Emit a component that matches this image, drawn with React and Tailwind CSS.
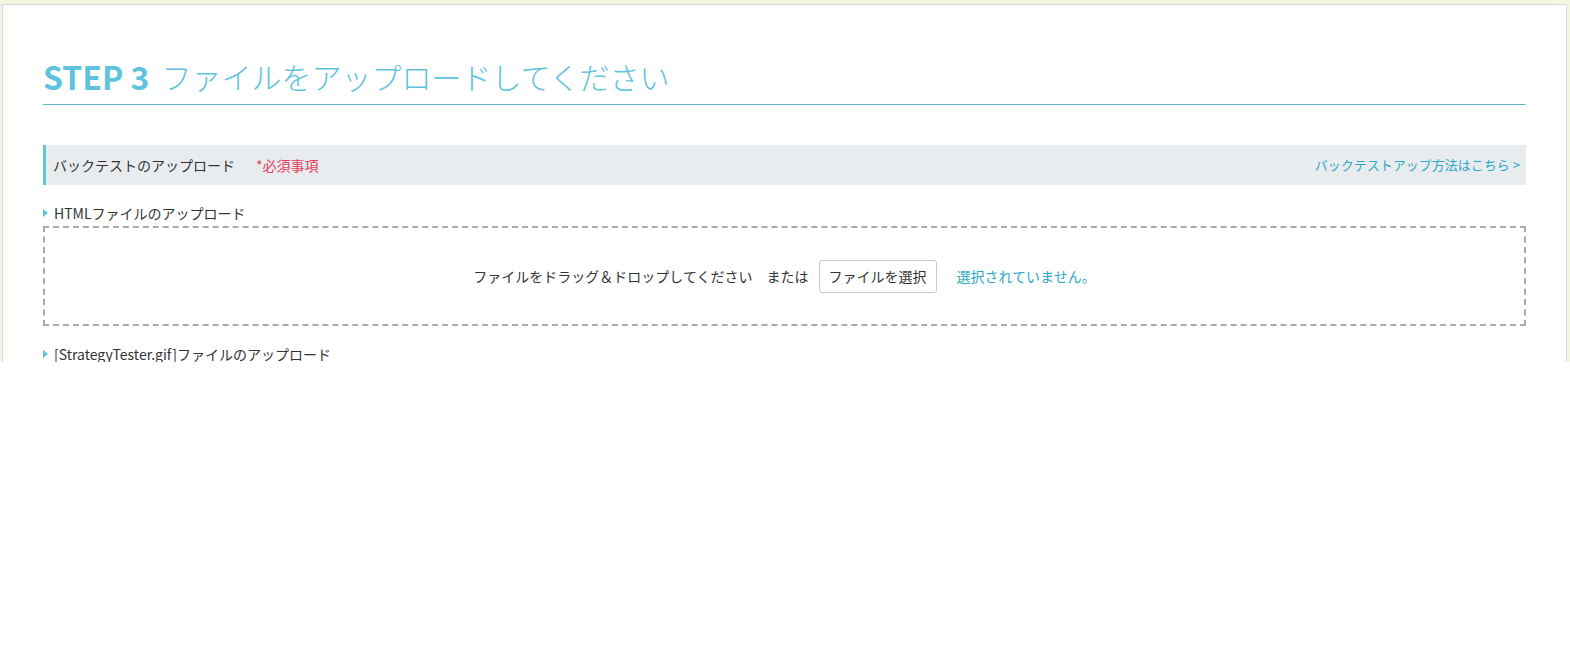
const FONT = { fontFamily: '"Noto Sans CJK JP", "Noto Sans", sans-serif' }

const Label = ({ children }) => (
  <div className="flex items-center gap-[6px] h-[20px] text-[14px] text-[#333]">
    <span className="w-0 h-0 border-y-[4px] border-y-transparent border-l-[5px] border-l-[#5cc3d6]" />
    <span>{children}</span>
  </div>
)

export default function App() {
  return (
    <div style={FONT} className="h-[362px] overflow-hidden bg-[#f2f7df] pt-[4px] pl-[2px] pr-[3px]">
      <div className="bg-white border border-[#d3dae3] px-[40px] pt-[51px] pb-10 h-[400px]">
        <h2 className="flex items-center gap-[12px] h-[40px] text-[#5ec3dc] border-b border-[#62b6c8] box-content pb-[8px]">
          <span className="text-[32px] font-bold">STEP 3</span>
          <span className="text-[30px] font-light">ファイルをアップロードしてください</span>
        </h2>

        <div className="mt-[40px] h-[40px] flex items-center justify-between bg-[#e9ecef] border-l-[3px] border-[#5cc8d0] pl-[7px] pr-[6px]">
          <div className="flex items-center gap-[21px] text-[14px]">
            <span className="text-[#333]">バックテストのアップロード</span>
            <span className="text-[#e4405c]">*必須事項</span>
          </div>
          <a className="text-[13px] text-[#2aa7c4]">バックテストアップ方法はこちら &gt;</a>
        </div>

        <div className="mt-[18px]">
          <Label>HTMLファイルのアップロード</Label>
        </div>
        <div className="mt-[3px] h-[100px] border-2 border-dashed border-[#a9a9ae] flex items-center justify-center text-[14px]">
          <span className="text-[#333]">ファイルをドラッグ＆ドロップしてください　または</span>
          <button className="ml-[10px] h-[33px] px-[9px] border border-[#c6c6cc] rounded-[3px] bg-white text-[#333] text-[14px]">
            ファイルを選択
          </button>
          <span className="ml-[20px] text-[#2aa7c4]">選択されていません。</span>
        </div>

        <div className="mt-[18px]">
          <Label>[StrategyTester.gif]ファイルのアップロード</Label>
        </div>
      </div>
    </div>
  )
}
